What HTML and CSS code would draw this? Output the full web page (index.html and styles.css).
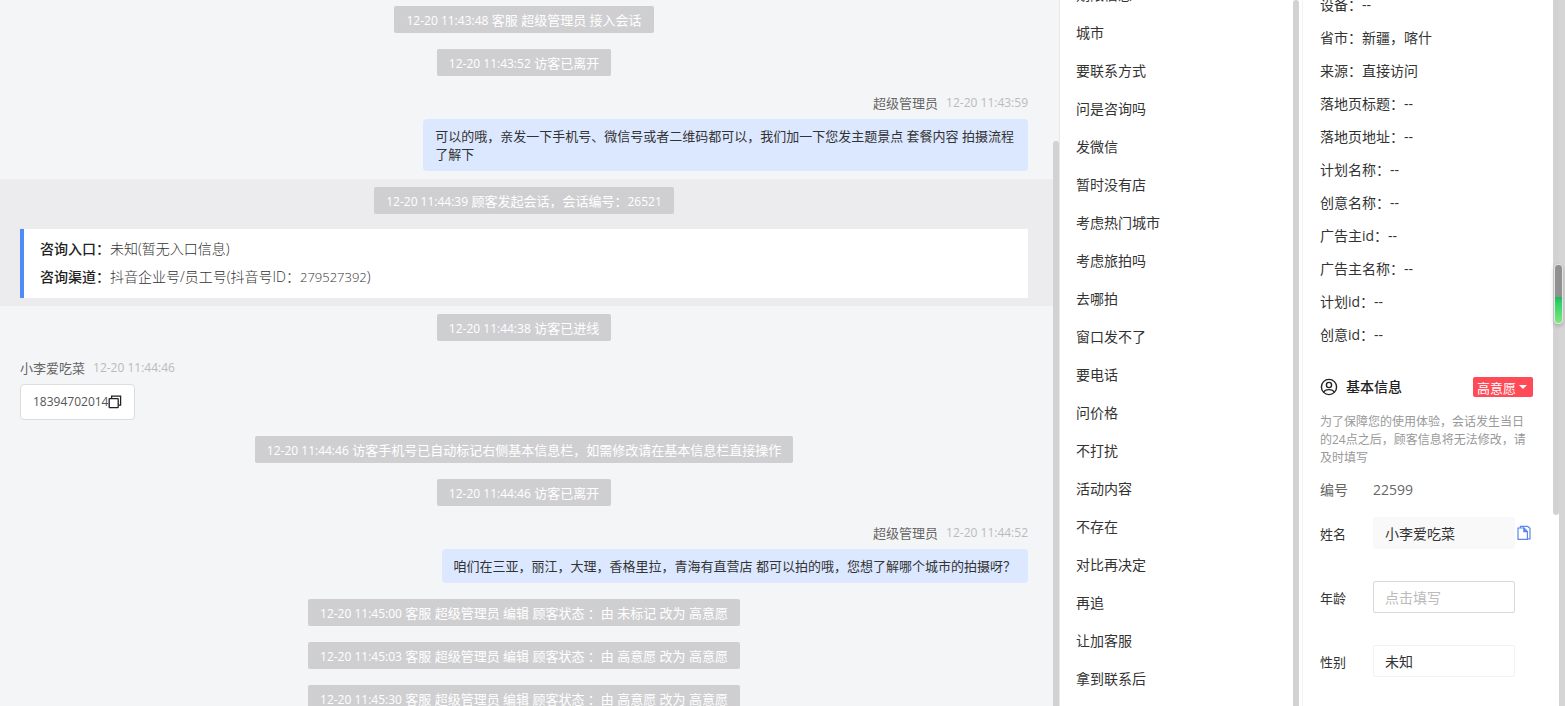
FILE: index.html
```html
<!DOCTYPE html>
<html lang="zh-CN">
<head>
    <meta charset="UTF-8">
    <meta name="viewport" content="width=device-width, initial-scale=1.0">
    <title>客服会话</title>
    <link rel="stylesheet" href="styles.css">
</head>
<body>
    <main class="chat">
        <div class="chat-body">
            <p class="notice"><time>12-20 11:43:48</time> 客服 超级管理员 接入会话</p>
            <p class="notice"><time>12-20 11:43:52</time> 访客已离开</p>
            <div class="message message-right">
                <div class="meta"><span>超级管理员</span><time>12-20 11:43:59</time></div>
                <div class="bubble">可以的哦，亲发一下手机号、微信号或者二维码都可以，我们加一下您发主题景点 套餐内容 拍摄流程了解下</div>
            </div>
            <section class="session">
                <p class="notice"><time>12-20 11:44:39</time> 顾客发起会话，会话编号：<span class="num">26521</span></p>
                <div class="session-card">
                    <p><strong>咨询入口：</strong>未知(暂无入口信息)</p>
                    <p><strong>咨询渠道：</strong>抖音企业号/员工号(抖音号ID：<span class="num">279527392</span>)</p>
                </div>
            </section>
            <p class="notice"><time>12-20 11:44:38</time> 访客已进线</p>
            <div class="message">
                <div class="meta"><span>小李爱吃菜</span><time>12-20 11:44:46</time></div>
                <div class="bubble bubble-white"><span class="num">18394702014</span><button type="button" class="icon-button" aria-label="复制">
                    <svg width="14" height="14" viewBox="0 0 14 14" fill="none" stroke="#222" stroke-width="1.3">
                        <rect x="1.2" y="3.6" width="9" height="9" rx="0.6"/>
                        <path d="M3.6 3.4V1.2h9v9h-2.2"/>
                    </svg>
                </button></div>
            </div>
            <p class="notice"><time>12-20 11:44:46</time> 访客手机号已自动标记右侧基本信息栏，如需修改请在基本信息栏直接操作</p>
            <p class="notice"><time>12-20 11:44:46</time> 访客已离开</p>
            <div class="message message-right">
                <div class="meta"><span>超级管理员</span><time>12-20 11:44:52</time></div>
                <div class="bubble">咱们在三亚，丽江，大理，香格里拉，青海有直营店 都可以拍的哦，您想了解哪个城市的拍摄呀？</div>
            </div>
            <p class="notice"><time>12-20 11:45:00</time> 客服 超级管理员 编辑 顾客状态 ：由 未标记 改为 高意愿</p>
            <p class="notice"><time>12-20 11:45:03</time> 客服 超级管理员 编辑 顾客状态 ：由 高意愿 改为 高意愿</p>
            <p class="notice"><time>12-20 11:45:30</time> 客服 超级管理员 编辑 顾客状态 ：由 高意愿 改为 高意愿</p>
        </div>
        <div class="thumb thumb-chat"></div>
    </main>

    <nav class="phrases">
        <ul>
            <li>期限信息</li>
            <li>城市</li>
            <li>要联系方式</li>
            <li>问是咨询吗</li>
            <li>发微信</li>
            <li>暂时没有店</li>
            <li>考虑热门城市</li>
            <li>考虑旅拍吗</li>
            <li>去哪拍</li>
            <li>窗口发不了</li>
            <li>要电话</li>
            <li>问价格</li>
            <li>不打扰</li>
            <li>活动内容</li>
            <li>不存在</li>
            <li>对比再决定</li>
            <li>再追</li>
            <li>让加客服</li>
            <li>拿到联系后</li>
        </ul>
        <div class="thumb thumb-phrases"></div>
    </nav>

    <aside class="info">
        <ul class="visit">
            <li>设备：--</li>
            <li>省市：新疆，喀什</li>
            <li>来源：直接访问</li>
            <li>落地页标题：--</li>
            <li>落地页地址：--</li>
            <li>计划名称：--</li>
            <li>创意名称：--</li>
            <li>广告主id：--</li>
            <li>广告主名称：--</li>
            <li>计划id：--</li>
            <li>创意id：--</li>
        </ul>
        <header class="info-header">
            <svg width="18" height="18" viewBox="0 0 18 18" fill="none" stroke="#222" stroke-width="1.4">
                <circle cx="9" cy="9" r="7.6"/>
                <circle cx="9" cy="7" r="2.6"/>
                <path d="M3.6 14.2c1-2 2.8-2.6 5.4-2.6s4.4.6 5.4 2.6"/>
            </svg>
            <h2>基本信息</h2>
            <button type="button" class="tag">高意愿<span class="caret"></span></button>
        </header>
        <p class="hint">为了保障您的使用体验，会话发生当日的24点之后，顾客信息将无法修改，请及时填写</p>
        <form>
            <div class="row row-text"><span class="row-label">编号</span><span>22599</span></div>
            <div class="row">
                <label class="row-label" for="name">姓名</label>
                <input type="text" id="name" class="filled" value="小李爱吃菜">
                <button type="button" class="icon-button" aria-label="复制姓名">
                    <svg width="14" height="16" viewBox="0 0 14 16" fill="none" stroke="#5b87ee" stroke-width="1.2">
                        <path d="M3.4 3V1.4h7.2l2.4 1.8v10.600h-2.300"/>
                        <path d="M1 3h6l3.400 3.400v8H1z"/>
                        <path d="M6.800 3.200v3.400h3.400z" fill="#5b87ee"/>
                    </svg>
                </button>
            </div>
            <div class="row">
                <label class="row-label" for="age">年龄</label>
                <input type="text" id="age" placeholder="点击填写">
            </div>
            <div class="row">
                <label class="row-label" for="gender">性别</label>
                <select id="gender" class="plain">
                    <option>未知</option>
                </select>
            </div>
        </form>
        <div class="thumb thumb-info"></div>
    </aside>

    <div class="page-scroll">
        <div class="meter"></div>
    </div>
</body>
</html>
```
FILE: styles.css
```css
* {
    margin: 0;
    padding: 0;
    box-sizing: border-box;
}
body {
    display: flex;
    height: 100vh;
    overflow: hidden;
    font-family: "Open Sans", "Noto Sans CJK SC", sans-serif;
    font-size: 14px;
    color: #333;
    background-color: #fff;
}
ul {
    list-style: none;
}
input, select, button {
    font: inherit;
    color: inherit;
}
.thumb {
    position: absolute;
    right: 0;
    width: 6px;
    background-color: #d2d2d2;
}

/* chat */
.chat {
    position: relative;
    flex: 1;
    min-width: 0;
    padding-right: 6px;
    overflow: hidden;
    background-color: #f4f5f7;
    font-size: 13px;
}
.chat-body {
    display: flex;
    flex-direction: column;
    margin-top: -2px;
}
.chat-body > .notice, .session > .notice {
    align-self: center;
    margin: 8px 25px 8px 20px;
}
.notice {
    padding: 2px 12px 0;
    line-height: 25px;
    border-radius: 2px;
    color: #fff;
    background-color: #cfcfd1;
    white-space: nowrap;
}
.notice time, .num {
    font-size: 12px;
}
.message {
    display: flex;
    flex-direction: column;
    align-items: flex-start;
    padding: 8px 25px 8px 20px;
}
.message-right {
    align-items: flex-end;
}
.meta {
    display: flex;
    gap: 8px;
    margin-bottom: 5px;
    line-height: 22px;
    color: #666;
}
.meta time {
    font-size: 12px;
    color: #bbb;
}
.bubble {
    max-width: 60%;
    padding: 8px 12px;
    line-height: 18px;
    border-radius: 4px;
    background-color: #dce8ff;
}
.bubble-white {
    display: flex;
    border: 1px solid #ddd;
    color: #555;
    background-color: #fff;
}
.icon-button {
    border: none;
    background: none;
    line-height: 0;
    cursor: pointer;
}
.session {
    display: flex;
    flex-direction: column;
    padding-bottom: 8px;
    background-color: #ececee;
}
.session-card {
    margin: 7px 25px 0 20px;
    padding: 6px 16px 7px;
    border-left: 4px solid #4c8bf8;
    font-size: 14px;
    font-weight: 300;
    line-height: 28px;
    background-color: #fff;
}
.session-card strong {
    font-weight: 500;
    color: #222;
}
.session-card .num {
    font-size: 13px;
}
.thumb-chat {
    top: 20%;
    bottom: 0;
    border-radius: 3px 3px 0 0;
}

/* quick phrases */
.phrases {
    position: relative;
    flex: 0 0 240px;
    padding-left: 16px;
    border-left: 1px solid #e8e8e8;
    overflow: hidden;
}
.phrases ul {
    margin-top: -24px;
}
.phrases li {
    line-height: 38px;
}
.thumb-phrases {
    top: 0;
    bottom: 0;
    border-radius: 3px 3px 0 0;
}

/* visitor info */
.info {
    position: relative;
    flex: 0 0 257px;
    margin-left: 3px;
    padding: 0 26px 0 17px;
    border-left: 1px solid #f2f2f2;
    overflow: hidden;
}
.visit {
    margin-top: -12px;
}
.visit li {
    line-height: 33px;
}
.info-header {
    display: flex;
    align-items: center;
    margin-top: 26px;
}
.info-header h2 {
    margin-left: 8px;
    font-size: 14px;
    font-weight: 500;
    line-height: 20px;
    color: #222;
}
.tag {
    display: flex;
    align-items: center;
    gap: 3px;
    height: 20px;
    margin-left: auto;
    padding: 0 6px 0 4px;
    border: none;
    border-radius: 2px;
    font-size: 13px;
    color: #fff;
    background-color: #ff4a57;
    cursor: pointer;
}
.caret {
    border: 4px solid transparent;
    border-top-color: #fff;
    border-bottom: 0;
}
.hint {
    margin-top: 16px;
    font-size: 12px;
    line-height: 18px;
    color: #999;
}
.row {
    display: flex;
    align-items: center;
    height: 32px;
    margin-bottom: 32px;
}
.row-label {
    width: 53px;
    font-size: 13px;
}
.row-text {
    margin: 6px 0 12px;
    color: #666;
}
.row-text .row-label {
    font-size: 14px;
}
.row input, .row select {
    width: 142px;
    height: 32px;
    padding: 0 11px;
    border: 1px solid #d9d9d9;
    border-radius: 2px;
    background-color: #fff;
    appearance: none;
}
.row .filled {
    border-color: #f9f9f9;
    background-color: #f9f9f9;
}
.row .plain {
    border-color: #f2f2f2;
}
.row input::placeholder {
    color: #bbb;
}
.row .icon-button {
    margin-left: 2px;
}
.thumb-info {
    top: 0;
    height: 73%;
    border-radius: 0 0 3px 3px;
}

.page-scroll {
    position: relative;
    flex: 0 0 6px;
    background-color: #d5d5d5;
}
.meter {
    position: absolute;
    top: 264px;
    right: 2px;
    width: 9px;
    height: 60px;
    border: 1px solid #e4e4e4;
    border-radius: 4px;
    background: linear-gradient(#909090 55%, #1fb55c 55%, #2fd06a 65%, #7de87a);
    box-shadow: 0 2px 4px rgba(0, 0, 0, 0.2);
}
```
